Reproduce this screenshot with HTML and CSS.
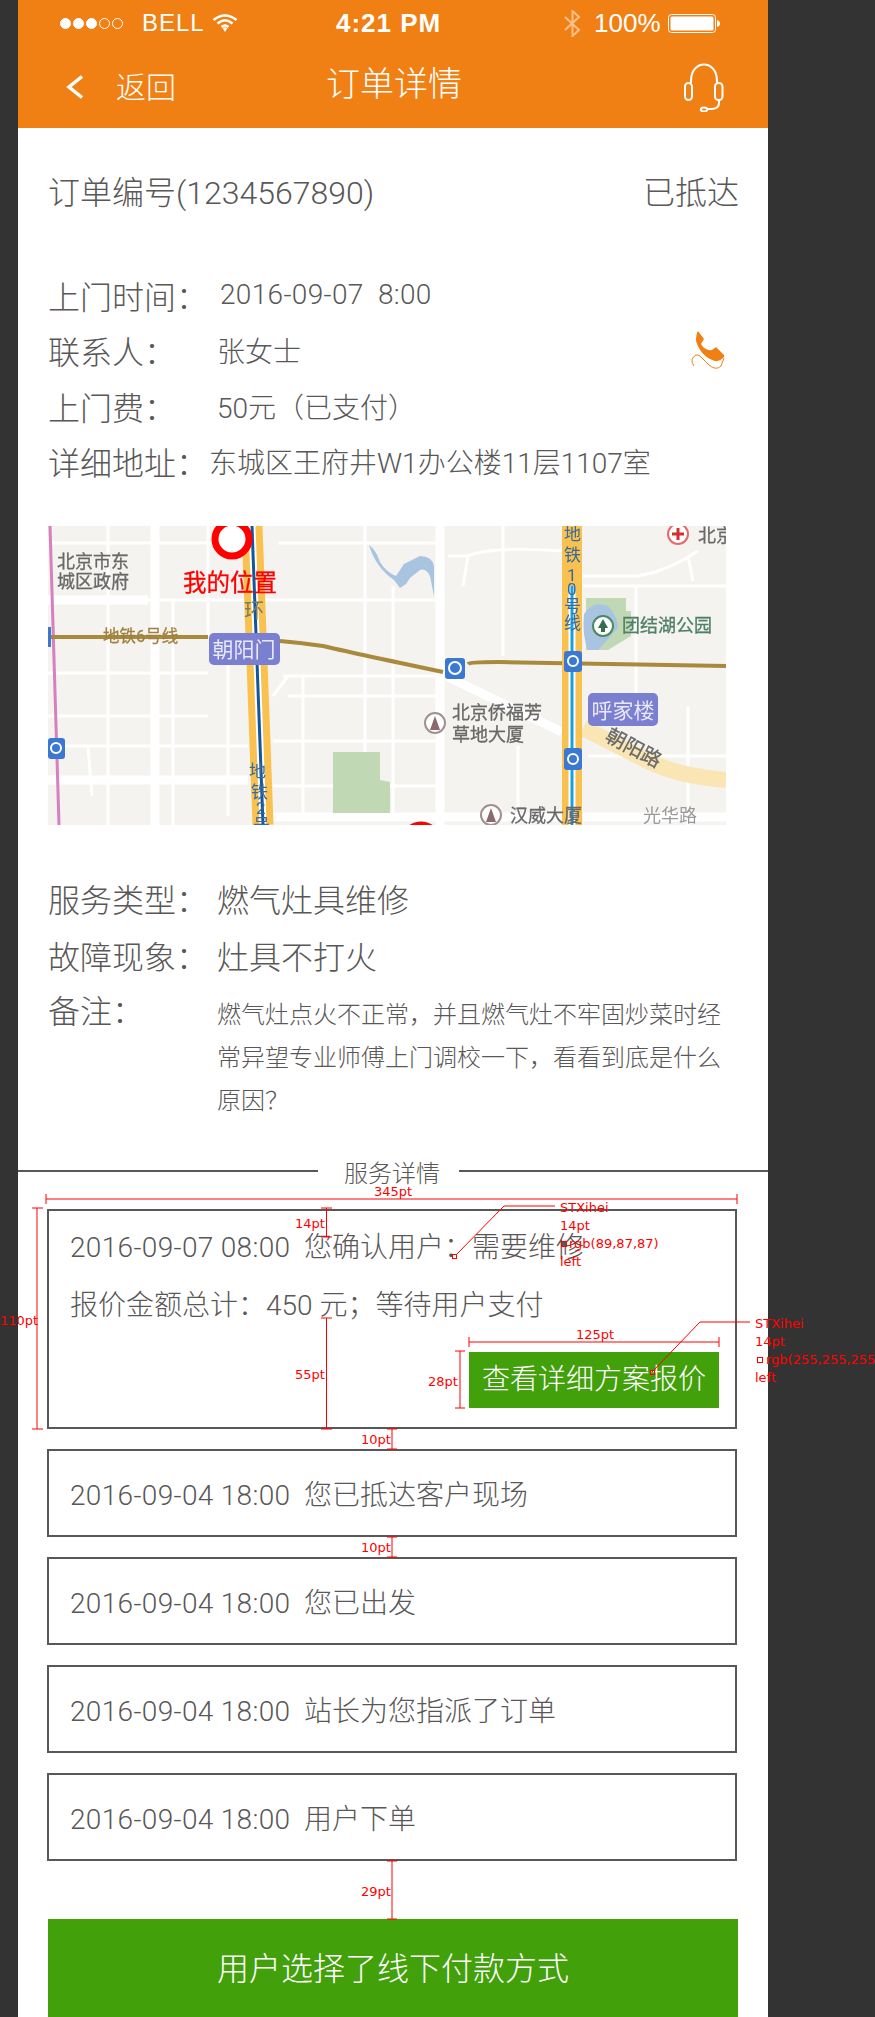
FILE: index.html
```html
<!DOCTYPE html>
<html lang="zh-CN">
<head>
  <meta charset="UTF-8" />
  <meta name="viewport" content="width=device-width, initial-scale=1" />
  <title>订单详情</title>
  <link rel="stylesheet" href="styles.css">
</head>
<body>

  <div class="screen">
    <header class="top">
      <div class="status-bar">
        <div class="status-left">
          <span class="dots"><i></i><i></i><i></i><i class="off"></i><i class="off"></i></span>
          <span class="carrier">BELL</span>
          <svg class="wifi" width="26" height="18" viewBox="0 0 26 18">
            <path d="M1.5 6 Q13 -3 24.5 6" />
            <path d="M5.5 9.5 Q13 3 20.5 9.5" />
            <path d="M9.5 13 Q13 10 16.5 13" />
            <path class="wifi-tip" d="M10.5 14 Q13 12.5 15.5 14 L13 18Z" />
          </svg>
        </div>
        <span class="clock">4:21 PM</span>
        <div class="status-right">
          <svg class="bluetooth" width="17" height="27" viewBox="0 0 17 27">
            <path d="M1 7 L15 20 L8.5 26 V1 L15 7 L1 20" />
          </svg>
          <span class="battery-text">100%</span>
          <svg class="battery" width="52" height="19" viewBox="0 0 52 19">
            <rect class="battery-case" x="0.5" y="0.5" width="47" height="18" rx="3" />
            <rect class="battery-fill" x="2.5" y="2.5" width="43" height="14" rx="1.5" />
            <path class="battery-fill" d="M49 6 Q52 7 52 9.5 Q52 12 49 13Z" />
          </svg>
        </div>
      </div>
      <nav class="nav">
        <svg class="back-icon" width="18" height="24" viewBox="0 0 18 24">
          <path d="M16 1.5 L3 12 L16 22.5" />
        </svg>
        <a class="back-link" href="#">返回</a>
        <h1 class="title">订单详情</h1>
        <svg class="headset" width="40" height="49" viewBox="0 0 40 49">
          <path d="M7 20 V18 C7 -4 33 -4 33 18 V20" />
          <rect x="1" y="20" width="7" height="17" rx="3.5" />
          <rect x="31" y="20" width="7.5" height="17" rx="3.5" />
          <path d="M35 37 V40 Q35 46 27 46 H23" />
          <ellipse cx="20" cy="46.5" rx="3.2" ry="2" />
        </svg>
      </nav>
    </header>

    <main>
      <div class="order-head">
        <span>订单编号(1234567890)</span>
        <span>已抵达</span>
      </div>

      <section class="info">
        <div class="row">
          <span class="label label-date">上门时间：</span>
          <span class="value date">2016-09-07&nbsp; 8:00</span>
        </div>
        <div class="row">
          <span class="label">联系人：</span>
          <span class="value">张女士</span>
          <svg class="phone-icon" width="34" height="38" viewBox="0 0 34 38">
            <path class="handset" d="M7 0 L13 8 L10 13 Q14 20 21 19 L25 16 L33 24 Q34 26 32 27 Q28 31 24 30 Q10 26 5 10 Q5 3 7 0Z" />
            <path class="cord" d="M3 35 Q-2 28 5 24 Q8 23 11 27 L18 34 Q25 40 30 35 L33 27" />
          </svg>
        </div>
        <div class="row">
          <span class="label">上门费：</span>
          <span class="value">50元（已支付）</span>
        </div>
        <div class="row">
          <span class="label label-short">详细地址：</span>
          <span class="value">东城区王府井W1办公楼11层1107室</span>
        </div>
      </section>

      <svg class="map" width="678" height="299" viewBox="0 0 678 299">
        <rect class="map-bg" width="678" height="299" />

        <!-- minor roads -->
        <g class="road-thin">
          <path d="M0 17 H180 M230 17 H392 M400 30 H420 Q440 20 514 25 M535 50 H590 Q620 45 650 25 M640 30 L645 55" />
          <path d="M0 74 H392 M535 60 H678 M0 147 H160 M235 150 H392 M0 190 H160 M240 170 H392" />
          <path d="M0 220 H200 M225 215 H392 M225 260 H285 M342 260 H392 M540 230 H678" />
          <path d="M60 0 V299 M125 74 V299 M160 0 V110 M180 120 V290 M255 150 V290 M317 0 V290 M345 60 V290 M455 0 V130 M588 60 V180 M640 180 V299 M470 220 V285" />
          <path d="M225 170 L240 150 M40 220 L44 270 M415 60 L420 30" />
        </g>
        <g class="road-wide">
          <path d="M107 0 V299 M392 0 V299 M0 254 H200 M225 291 H514 M535 291 H678 M0 74 H100" />
          <path d="M400 151 L514 206" />
        </g>
        <path class="road-cream" d="M535 202 L600 235 Q630 250 678 254" />

        <!-- park, water -->
        <path class="park" d="M285 226 H332 V254 L342 256 V287 H285Z" />
        <path class="water" d="M321 19 Q328 24 332 36 Q338 46 348 50 L356 38 L372 30 Q384 30 386 40 V70 L382 50 Q378 42 372 44 L362 52 L358 58 L352 62 L346 54 Q328 42 321 19Z" />
        <path class="park" d="M538 72 H578 V85 H583 V110 L560 124 H538Z" />
        <path class="water" d="M536 88 Q545 74 560 80 Q570 90 570 102 L550 124 H540 Q534 110 536 88Z" />

        <!-- subway lines -->
        <path class="line-pink" d="M2 0 L11 299" />
        <path class="line-brown" d="M0 111 H160 M232 115 Q255 117 275 120 Q300 126 395 146" />
        <path class="line-brown" d="M420 138 Q422 136 450 136 L678 140" />
        <path class="ring-yellow" d="M204 0 L215 299" />
        <path class="line-core" d="M204 0 L215 299" />
        <path class="ring-blue" d="M204 0 L215 299" />
        <path class="ten-yellow" d="M524 0 V299" />
        <path class="line-core" d="M524 60 V299" />
        <path class="ten-blue" d="M524 60 V299" />

        <!-- subway stops -->
        <g class="stops">
          <rect x="397" y="132" width="20" height="21" rx="3" />
          <rect x="516" y="125" width="18" height="21" rx="3" />
          <rect x="516" y="222" width="18" height="22" rx="3" />
          <rect x="0" y="212" width="17" height="21" rx="3" />
          <rect x="0" y="101" width="3" height="20" />
        </g>
        <g class="stops-mark">
          <circle cx="407" cy="142" r="6" />
          <circle cx="525" cy="135" r="5" />
          <circle cx="525" cy="233" r="5" />
          <circle cx="8" cy="222" r="5" />
        </g>

        <rect class="station" x="161" y="107" width="71" height="32" rx="5" />
        <rect class="station" x="540" y="167" width="70" height="33" rx="5" />
        <text class="station-text" x="196" y="131">朝阳门</text>
        <text class="station-text" x="575" y="192">呼家楼</text>

        <!-- place marks -->
        <circle class="place-ring" cx="555" cy="100" r="10" />
        <path class="tree" d="M555 93 L560 102 H557 V106 H553 V102 H550Z" />
        <circle class="place-ring place-ring-grey" cx="387" cy="197" r="10" />
        <path class="tower" d="M387 190 L392 204 H382Z" />
        <circle class="place-ring place-ring-grey" cx="443" cy="289" r="10" />
        <path class="tower" d="M443 282 L448 296 H438Z" />
        <circle class="place-ring place-ring-red" cx="630" cy="8" r="10" />
        <path class="cross" d="M630 2 V14 M624 8 H636" />

        <!-- labels -->
        <text class="map-label" x="9" y="42">北京市东</text>
        <text class="map-label" x="9" y="62">城区政府</text>
        <text class="map-label" x="404" y="193">北京侨福芳</text>
        <text class="map-label" x="404" y="215">草地大厦</text>
        <text class="map-label" x="462" y="296">汉威大厦</text>
        <text class="map-label map-label-light" x="595" y="296">光华路</text>
        <text class="map-label" x="650" y="16">北京</text>
        <text class="map-label map-label-park" x="574" y="106">团结湖公园</text>
        <text class="map-label map-label-road" transform="translate(556 214) rotate(28)">朝阳路</text>
        <text class="map-label map-label-line" x="55" y="116">地铁6号线</text>
        <text class="map-label map-label-ring" x="196" y="92">环</text>
        <g class="map-label map-label-subway">
          <text x="516" y="14">地</text>
          <text x="516" y="35">铁</text>
          <text x="519" y="55">1</text>
          <text x="519" y="69">0</text>
          <text x="516" y="86">号</text>
          <text x="516" y="103">线</text>
          <text x="201" y="251">地</text>
          <text x="203" y="272">铁</text>
          <text x="208" y="288">2</text>
          <text x="205" y="305">号</text>
        </g>

        <!-- my position -->
        <circle class="pin" cx="184" cy="13" r="17" />
        <circle class="pin" cx="373" cy="316" r="17" />
        <text class="pin-text" x="135" y="65">我的位置</text>
      </svg>

      <section class="service">
        <div class="row row-big">
          <span class="label">服务类型：</span>
          <span class="value">燃气灶具维修</span>
        </div>
        <div class="row row-big">
          <span class="label">故障现象：</span>
          <span class="value">灶具不打火</span>
        </div>
        <div class="row row-big row-note">
          <span class="label">备注：</span>
          <p class="note">燃气灶点火不正常，并且燃气灶不牢固炒菜时经<br>常异望专业师傅上门调校一下，看看到底是什么<br>原因？</p>
        </div>
      </section>

      <div class="divider"><span>服务详情</span></div>

      <section class="timeline">
        <div class="card card-main">
          <p><span class="date">2016-09-07 08:00</span>&nbsp; 您确认用户：需要维修</p>
          <p>报价金额总计：450 元；等待用户支付</p>
          <a class="quote-btn" href="#">查看详细方案报价</a>
        </div>
        <div class="card"><p><span class="date">2016-09-04 18:00</span>&nbsp; 您已抵达客户现场</p></div>
        <div class="card"><p><span class="date">2016-09-04 18:00</span>&nbsp; 您已出发</p></div>
        <div class="card"><p><span class="date">2016-09-04 18:00</span>&nbsp; 站长为您指派了订单</p></div>
        <div class="card"><p><span class="date">2016-09-04 18:00</span>&nbsp; 用户下单</p></div>
      </section>

      <a class="pay-btn" href="#">用户选择了线下付款方式</a>
    </main>
  </div>

  <!-- red spec marks drawn over the design -->
  <svg class="marks" width="875" height="2017" viewBox="0 0 875 2017">
    <path d="M46 1199 H737 M46 1194 V1204 M737 1194 V1204" />
    <path d="M37 1208 V1429 M32 1208 H43 M32 1429 H43" />
    <path d="M326.5 1208 V1237 M321 1208 H332 M321 1237 H332" />
    <path d="M326.5 1318 V1429 M321 1318 H332 M321 1429 H332" />
    <path d="M469 1342 H719 M469 1337 V1347 M719 1337 V1347" />
    <path d="M460 1351 V1408 M455 1351 H465 M455 1408 H465" />
    <path d="M392 1429 V1449 M387 1429 H397 M387 1449 H397" />
    <path d="M392 1537 V1557 M387 1537 H397 M387 1557 H397" />
    <path d="M392 1861 V1919 M387 1861 H397 M387 1919 H397" />
    <path d="M555 1206 H504 L456 1255" />
    <path d="M750 1322 H700 L652 1372" />
    <rect x="452.5" y="1254.5" width="4" height="4" />
    <rect x="650.5" y="1370.5" width="4" height="4" />
    <rect class="swatch-dark" x="561.5" y="1241.5" width="5" height="5" />
    <rect x="757.5" y="1357.5" width="5" height="5" />
    <text x="374" y="1196">345pt</text>
    <text x="0" y="1325">110pt</text>
    <text x="295" y="1228">14pt</text>
    <text x="295" y="1379">55pt</text>
    <text x="576" y="1339">125pt</text>
    <text x="428" y="1386">28pt</text>
    <text x="361" y="1444">10pt</text>
    <text x="361" y="1552">10pt</text>
    <text x="361" y="1896">29pt</text>
    <text x="560" y="1212">STXihei</text>
    <text x="560" y="1230">14pt</text>
    <text x="569" y="1248">rgb(89,87,87)</text>
    <text x="560" y="1266">left</text>
    <text x="755" y="1328">STXihei</text>
    <text x="755" y="1346">14pt</text>
    <text x="766" y="1364">rgb(255,255,255)</text>
    <text x="755" y="1382">left</text>
  </svg>

</body>
</html>
```

FILE: styles.css
```css
/* Base */
html, body {
  margin: 0;
  height: 2017px;
  overflow: hidden;
}

body {
  position: relative;
  background: #333333;
  font-family: Roboto, "Noto Sans CJK SC", sans-serif;
  font-weight: 300;
  color: #595757;
}

p, h1 {
  margin: 0;
  font-weight: inherit;
}

a {
  text-decoration: none;
}

.screen {
  width: 750px;
  height: 2017px;
  margin-left: 18px;
  background: #ffffff;
  overflow: hidden;
}

/* Orange top */
.top {
  height: 128px;
  background: #f08014;
  color: #ffffff;
}

.status-bar {
  display: flex;
  align-items: center;
  height: 46px;
  padding-left: 42px;
  font-family: "Liberation Sans", sans-serif;
  font-weight: 400;
}

.status-left,
.status-right {
  display: flex;
  align-items: center;
}

.status-left {
  width: 178px;
}

.dots {
  display: flex;
  gap: 2px;
  width: 82px;
}

.dots i {
  width: 11px;
  height: 11px;
  border: 1px solid #ffffff;
  border-radius: 50%;
  background: #ffffff;
  box-sizing: border-box;
}

.dots i.off {
  background: none;
}

.carrier {
  width: 70px;
  font-size: 24px;
  letter-spacing: 1px;
}

.wifi path {
  fill: none;
  stroke: #ffffff;
  stroke-width: 2.6;
}

.wifi .wifi-tip {
  fill: #ffffff;
  stroke: none;
}

.clock {
  margin-left: 98px;
  width: 104px;
  font-size: 26px;
  font-weight: 700;
  letter-spacing: 1px;
  white-space: nowrap;
}

.status-right {
  margin-left: 124px;
}

.bluetooth path {
  fill: none;
  stroke: rgba(255, 255, 255, 0.5);
  stroke-width: 2;
}

.battery-text {
  margin-left: 13px;
  width: 74px;
  font-size: 26px;
}

.battery-case {
  fill: none;
  stroke: #ffffff;
}

.battery-fill {
  fill: #ffffff;
}

.nav {
  position: relative;
  display: flex;
  align-items: center;
  height: 82px;
  padding-left: 48px;
}

.back-icon path {
  fill: none;
  stroke: #ffffff;
  stroke-width: 3.5;
}

.back-link {
  margin: 0 0 4px 32px;
  font-size: 30px;
  color: #ffffff;
}

.title {
  position: absolute;
  left: 2px;
  right: 0;
  top: 16px;
  text-align: center;
  font-size: 34px;
  line-height: 44px;
}

.headset {
  margin-left: auto;
  margin-right: 44px;
}

.headset path,
.headset rect,
.headset ellipse {
  fill: none;
  stroke: #ffffff;
  stroke-width: 2;
}

/* Order header */
.order-head {
  display: flex;
  justify-content: space-between;
  align-items: center;
  box-sizing: border-box;
  height: 128px;
  padding: 0 29px 5px 30px;
  font-size: 32px;
}

/* Rows */
.info {
  margin-top: 13px;
}

.row {
  display: flex;
  align-items: center;
  box-sizing: border-box;
  height: 55.5px;
  padding: 0 0 4px 30px;
  font-size: 28px;
}

.label {
  flex: none;
  width: 169px;
  font-size: 32px;
}

.label-date {
  width: 172px;
}

.label-short {
  width: 161px;
}

.date {
  letter-spacing: 0.33px;
}

.phone-icon {
  margin-left: auto;
  margin-right: 43px;
}

.handset {
  fill: #f08014;
}

.cord {
  fill: none;
  stroke: #f08014;
  stroke-width: 1;
}

/* Map */
.map {
  display: block;
  margin: 35px 0 0 30px;
  filter: blur(0.5px);
}

.map-bg { fill: #f4f3ef; }
.road-thin { fill: none; stroke: #ffffff; stroke-width: 3; }
.road-wide { fill: none; stroke: #ffffff; stroke-width: 9; }
.road-cream { fill: none; stroke: #fae6b4; stroke-width: 16; }
.park { fill: #c0d9b4; }
.water { fill: #a9c4e0; }
.line-pink { fill: none; stroke: #d77fc0; stroke-width: 3; }
.line-brown { fill: none; stroke: #a98a3c; stroke-width: 4; }
.line-core { fill: none; stroke: #ffffff; stroke-width: 7; }
.ring-yellow { fill: none; stroke: #f8c150; stroke-width: 21; }
.ring-blue { fill: none; stroke: #10589e; stroke-width: 3; }
.ten-yellow { fill: none; stroke: #f8c150; stroke-width: 20; }
.ten-blue { fill: none; stroke: #14a4e4; stroke-width: 3; }
.stops { fill: #3a78d2; }
.stops-mark { fill: none; stroke: #ffffff; stroke-width: 2; }
.station { fill: #7b7fd0; }

.station-text {
  fill: #e8e8f8;
  font-size: 21px;
  font-weight: 400;
  text-anchor: middle;
}

.place-ring { fill: #ffffff; stroke: #4a8a60; stroke-width: 2; }
.place-ring-grey { stroke: #a09090; }
.place-ring-red { stroke: #e46a6a; }
.tree { fill: #35704a; }
.tower { fill: #8a6a6a; }
.cross { fill: none; stroke: #d62e2e; stroke-width: 3; }

.map-label {
  fill: #686868;
  stroke: #686868;
  stroke-width: 0.3;
  font-size: 18px;
  font-weight: 400;
}

.map-label-light { fill: #9a9a9a; stroke: none; }
.map-label-park { fill: #4f8066; stroke: #4f8066; }
.map-label-road { font-size: 20px; }
.map-label-line { fill: #a08040; stroke: #a08040; font-size: 16.5px; }
.map-label-ring { fill: #7a7a60; stroke: none; font-size: 20px; }
.map-label-subway { fill: #3a6a9a; stroke: none; font-size: 17px; }

.pin {
  fill: #ffffff;
  stroke: #ff0000;
  stroke-width: 7;
}

.pin-text {
  fill: #ff0000;
  stroke: #ff0000;
  stroke-width: 0.3;
  font-size: 23.5px;
  font-weight: 400;
}

/* Service block */
.service {
  margin-top: 47px;
}

.row-big {
  height: 56.5px;
  font-size: 32px;
}

.row-note {
  align-items: flex-start;
  height: auto;
  padding-bottom: 0;
}

.row-note .label {
  line-height: 54px;
}

.note {
  padding-top: 9px;
  font-size: 24px;
  line-height: 43px;
  white-space: nowrap;
}

/* Divider */
.divider {
  display: flex;
  align-items: center;
  height: 40px;
  margin-top: 28px;
  font-size: 24px;
}

.divider span {
  margin: 0 19px 0 26px;
}

.divider::before,
.divider::after {
  content: "";
  flex: 1;
  height: 2px;
  background: #595757;
}

.divider::before {
  flex: none;
  width: 300px;
}

/* Cards */
.timeline {
  display: flex;
  flex-direction: column;
  gap: 20px;
  width: 690px;
  margin: 18px 0 0 29px;
}

.card {
  display: flex;
  align-items: center;
  box-sizing: border-box;
  height: 88px;
  padding: 0 16px 0 21px;
  border: 2px solid #595757;
  font-size: 28px;
}

.card-main {
  flex-direction: column;
  align-items: flex-start;
  height: 220px;
  padding-top: 8px;
}

.card-main p {
  line-height: 58px;
}

.quote-btn {
  align-self: flex-end;
  width: 250px;
  height: 56px;
  margin-top: 17px;
  background: #42a00b;
  color: #ffffff;
  text-align: center;
  line-height: 56px;
}

.pay-btn {
  display: block;
  width: 690px;
  height: 100px;
  margin: 58px 0 0 30px;
  background: #42a00b;
  color: #ffffff;
  text-align: center;
  font-size: 32px;
  line-height: 100px;
}

/* Red spec marks */
.marks {
  position: absolute;
  top: 0;
  left: 0;
  pointer-events: none;
}

.marks path,
.marks rect {
  fill: none;
  stroke: #ff0000;
  stroke-width: 1;
}

.marks .swatch-dark {
  fill: #595757;
}

.marks text {
  fill: #ff0000;
  font-family: "DejaVu Sans", sans-serif;
  font-size: 13px;
  font-weight: 400;
}
```
